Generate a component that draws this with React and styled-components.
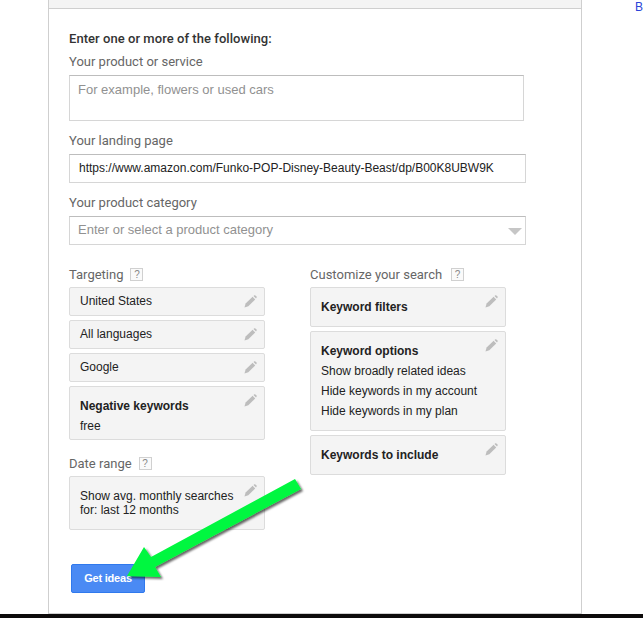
import styled, { createGlobalStyle } from "styled-components";

const GlobalStyle = createGlobalStyle`
  html, body {
    margin: 0;
    padding: 0;
    background: #fff;
    overflow: hidden;
  }
`;

const Page = styled.div`
  position: relative;
  width: 643px;
  height: 618px;
  overflow: hidden;
  display: flex;
  flex-direction: column;
  font-family: "Liberation Sans", Arial, sans-serif;
`;

const Main = styled.div`
  flex: 1;
  min-height: 0;
  display: flex;
  align-items: stretch;
`;

const Panel = styled.section`
  box-sizing: border-box;
  width: 535px;
  margin-left: 48px;
  border: 1px solid #cfcfcf;
  border-top: 0;
  display: flex;
  flex-direction: column;
`;

const PanelTop = styled.div`
  height: 8px;
  background: #f4f4f4;
  border-bottom: 1px solid #cfcfcf;
`;

const Form = styled.div`
  padding: 21px 0 0 20px;
  display: flex;
  flex-direction: column;
`;

const Heading = styled.h2`
  margin: 0;
  height: 17px;
  font: 500 13px/17px Roboto, sans-serif;
  letter-spacing: 0.05px;
  color: #333;
`;

const Label = styled.label`
  display: block;
  font: 400 13px/17px Roboto, sans-serif;
  color: #666;
  margin-top: ${(p) => p.$top}px;
`;

const Field = styled.div`
  box-sizing: border-box;
  position: relative;
  width: ${(p) => p.$width}px;
  height: ${(p) => p.$height}px;
  margin-top: ${(p) => p.$top}px;
  padding: ${(p) => (p.$tall ? "6px 8px" : p.$placeholder ? "0 8px 2px" : "0 9px 2px")};
  display: flex;
  align-items: ${(p) => (p.$tall ? "flex-start" : "center")};
  white-space: nowrap;
  border: 1px solid #d6d6d6;
  border-top-color: #bdbdbd;
  font-size: 13px;
  line-height: 16px;
  color: ${(p) => (p.$placeholder ? "#919191" : "#222")};
`;

const UrlText = styled.span`
  font-size: 12px;
`;

const Caret = styled.span`
  position: absolute;
  right: 3px;
  top: 11px;
  width: 0;
  height: 0;
  border-left: 7px solid transparent;
  border-right: 7px solid transparent;
  border-top: 7px solid #c6c6c6;
`;

const Columns = styled.div`
  display: flex;
  gap: 45px;
  margin-top: 21px;
`;

const Column = styled.div`
  width: 196px;
  display: flex;
  flex-direction: column;
`;

const SectionLabel = styled.div`
  display: flex;
  align-items: center;
  gap: ${(p) => p.$gap || 7}px;
  height: 17px;
  margin-top: ${(p) => p.$top || 0}px;
  margin-bottom: 4px;
  font: 400 13px/17px Roboto, sans-serif;
  color: #666;
`;

const Help = styled.span`
  box-sizing: border-box;
  width: 13px;
  height: 13px;
  border: 1px solid #d0d0d0;
  background: #fafafa;
  color: #888;
  font: 400 10px/11px "Liberation Sans", sans-serif;
  text-align: center;
`;

const Stack = styled.div`
  display: flex;
  flex-direction: column;
  gap: 4px;
`;

const Card = styled.div`
  box-sizing: border-box;
  position: relative;
  height: ${(p) => p.$height}px;
  padding: ${(p) => p.$pad || "0 10px"};
  display: flex;
  flex-direction: column;
  justify-content: center;
  background: #f4f4f4;
  border: 1px solid #dcdcdc;
  border-radius: 2px;
  font-size: 12px;
  line-height: 20px;
  color: #222;
`;

const CardTitle = styled.strong`
  font-weight: 700;
  color: #222;
`;

const DateText = styled.div`
  line-height: 14px;
`;

const EditIcon = styled.svg`
  position: absolute;
  right: 7px;
  top: 7px;
  width: 13px;
  height: 13px;
  fill: #bdbdbd;
`;

const Submit = styled.button`
  box-sizing: border-box;
  width: 74px;
  height: 29px;
  margin: 34px 0 0 2px;
  padding: 0 0 2px;
  border: 1px solid #3079ed;
  border-radius: 2px;
  background: #4a8af4;
  color: #fff;
  font: 700 11px "Liberation Sans", sans-serif;
  letter-spacing: -0.2px;
`;

const SideLink = styled.a`
  margin: 0 0 0 53px;
  height: 14px;
  font: 400 12px/14px "Liberation Sans", sans-serif;
  color: #2a44d8;
`;

const BottomStrip = styled.div`
  height: 4px;
  background: #0d0b0b;
`;

const ArrowLayer = styled.svg`
  position: absolute;
  left: 120px;
  top: 470px;
  width: 190px;
  height: 120px;
  pointer-events: none;
`;

function Pencil() {
  return (
    <EditIcon viewBox="0 0 13 13">
      <path d="M0.5 12.5 L1.6 8.6 L8.6 1.8 L11.2 4.4 L4.3 11.3 Z" />
      <path d="M9.5 1 L10.4 0.3 Q10.9 0 11.4 0.4 L12.6 1.6 Q13 2.1 12.6 2.6 L12 3.5 Z" />
    </EditIcon>
  );
}

function Section({ title, top, gap, children }) {
  return (
    <>
      <SectionLabel $top={top} $gap={gap}>
        {title}
        <Help>?</Help>
      </SectionLabel>
      <Stack>{children}</Stack>
    </>
  );
}

function App() {
  return (
    <Page>
      <GlobalStyle />
      <Main>
        <Panel>
          <PanelTop />
          <Form>
            <Heading>Enter one or more of the following:</Heading>
            <Label $top={6}>Your product or service</Label>
            <Field $width={455} $height={46} $top={5} $tall $placeholder>
              For example, flowers or used cars
            </Field>
            <Label $top={11}>Your landing page</Label>
            <Field $width={457} $height={29} $top={5}>
              <UrlText>https://www.amazon.com/Funko-POP-Disney-Beauty-Beast/dp/B00K8UBW9K</UrlText>
            </Field>
            <Label $top={11}>Your product category</Label>
            <Field $width={457} $height={29} $top={5} $placeholder>
              Enter or select a product category
              <Caret />
            </Field>
            <Columns>
              <Column>
                <Section title="Targeting">
                  <Card $height={29} $pad="0 10px 2px">
                    United States
                    <Pencil />
                  </Card>
                  <Card $height={29} $pad="0 10px 2px">
                    All languages
                    <Pencil />
                  </Card>
                  <Card $height={29} $pad="0 10px 2px">
                    Google
                    <Pencil />
                  </Card>
                  <Card $height={54} $pad="6px 10px 0">
                    <CardTitle>Negative keywords</CardTitle>
                    free
                    <Pencil />
                  </Card>
                </Section>
                <Section title="Date range" top={15}>
                  <Card $height={54}>
                    <DateText>
                      Show avg. monthly searches
                      <br />
                      for: last 12 months
                    </DateText>
                    <Pencil />
                  </Card>
                </Section>
                <Submit>Get ideas</Submit>
              </Column>
              <Column>
                <Section title="Customize your search" gap={9}>
                  <Card $height={40}>
                    <CardTitle>Keyword filters</CardTitle>
                    <Pencil />
                  </Card>
                  <Card $height={100}>
                    <CardTitle>Keyword options</CardTitle>
                    Show broadly related ideas
                    <br />
                    Hide keywords in my account
                    <br />
                    Hide keywords in my plan
                    <Pencil />
                  </Card>
                  <Card $height={40}>
                    <CardTitle>Keywords to include</CardTitle>
                    <Pencil />
                  </Card>
                </Section>
              </Column>
            </Columns>
          </Form>
        </Panel>
        <SideLink>B</SideLink>
      </Main>
      <BottomStrip />
      <ArrowLayer viewBox="120 470 190 120">
        <defs>
          <filter id="arrowShadow" x="-10%" y="-10%" width="125%" height="125%">
            <feDropShadow dx="2" dy="2" stdDeviation="1.2" floodColor="#000" floodOpacity="0.6" />
          </filter>
        </defs>
        <polygon
          points="295,479 301,489 155,567 161,577 127,576 144,547 151,557"
          fill="#00f73f"
          filter="url(#arrowShadow)"
        />
      </ArrowLayer>
    </Page>
  );
}

export default App;
